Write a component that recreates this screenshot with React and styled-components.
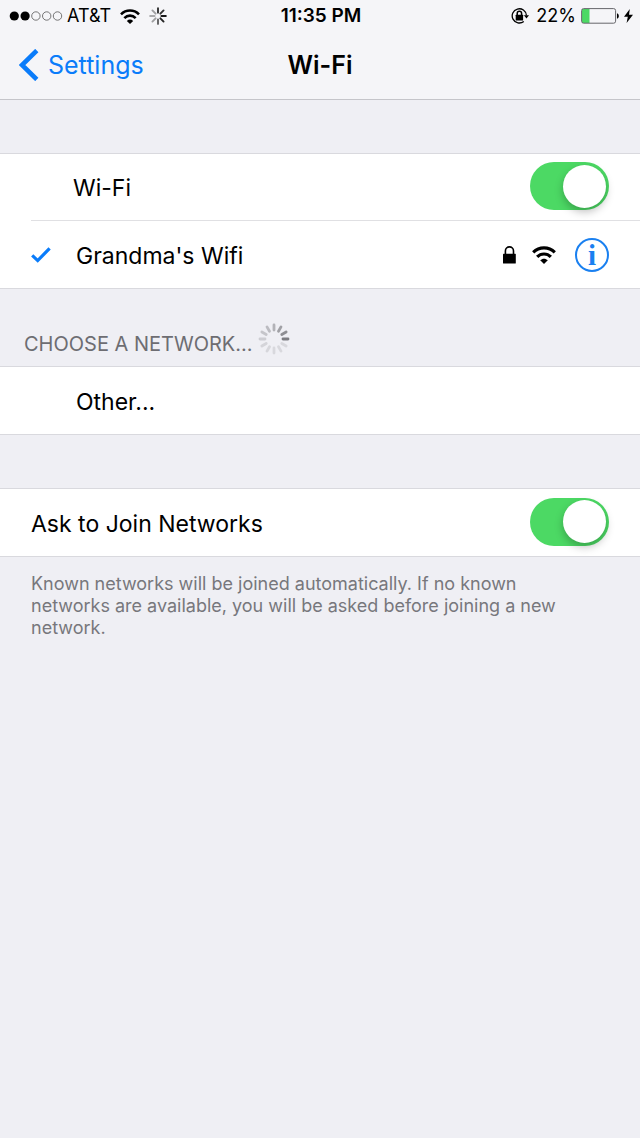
import React, { useState } from 'react';
import styled, { createGlobalStyle } from 'styled-components';

const GlobalStyle = createGlobalStyle`
  * {
    box-sizing: border-box;
  }

  body {
    margin: 0;
    background-color: #efeff4;
    color: #000000;
    font-family: Inter, "Liberation Sans", sans-serif;
    font-size: 23px;
  }
`;

const Header = styled.header`
  background-color: #f5f5f8;
  border-bottom: 1px solid #c5c5ca;
`;

const StatusBar = styled.div`
  display: grid;
  grid-template-columns: 1fr auto 1fr;
  align-items: center;
  height: 32px;
  padding: 0 7px 0 9px;
  font-size: 18px;
  line-height: 32px;
`;

const StatusGroup = styled.div`
  display: flex;
  align-items: center;
  justify-content: ${({ $end }) => ($end ? 'flex-end' : 'flex-start')};
  gap: ${({ $end }) => ($end ? 5 : 9)}px;
`;

const Carrier = styled.span`
  display: flex;
  align-items: center;
  gap: 4px;
`;

const Clock = styled.time`
  font-size: 19px;
  font-weight: 600;
`;

const Percent = styled.span`
  margin-left: 2px;
`;

const NavBar = styled.nav`
  display: grid;
  grid-template-columns: 1fr auto 1fr;
  align-items: center;
  height: 67px;
  padding: 0 19px 2px;
`;

const BackLink = styled.a`
  display: flex;
  align-items: center;
  gap: 9px;
  color: #0a7cfa;
  font-size: 25px;
  text-decoration: none;
`;

const Title = styled.h1`
  margin: 0;
  font-size: 25px;
  font-weight: 600;
`;

const Group = styled.section`
  margin-top: ${({ $spaced }) => ($spaced ? 53 : 0)}px;
  background-color: #ffffff;
  border-top: 1px solid #d9d9de;
  border-bottom: 1px solid #d9d9de;
`;

const Row = styled.div`
  display: flex;
  align-items: center;
  height: ${({ $short }) => ($short ? 66 : 67)}px;
  margin-left: 31px;
  padding-right: 31px;

  & + & {
    height: 68px;
    border-top: 1px solid #e0e0e3;
  }
`;

const RowLabel = styled.label`
  flex: 1;
  padding-top: 2px;
  padding-left: ${({ $indent }) => $indent || 0}px;
`;

const NetworkButton = styled.button`
  display: flex;
  flex: 1;
  align-items: center;
  padding: 0;
  border: 0;
  background: none;
  color: inherit;
  font: inherit;
  text-align: left;
`;

const NetworkName = styled.span`
  padding-top: 2px;
`;

const CheckSlot = styled.span`
  display: flex;
  width: 45px;
`;

const NetworkIcons = styled.span`
  display: flex;
  align-items: center;
  gap: 16px;
  margin-left: auto;
  margin-right: 19px;
`;

const InfoButton = styled.button`
  display: flex;
  align-items: center;
  justify-content: center;
  width: 34px;
  height: 34px;
  padding: 0;
  border: 2px solid #1a80f0;
  border-radius: 50%;
  background: none;
  color: #1a80f0;
  font-family: "Liberation Serif", serif;
  font-size: 29px;
  font-weight: bold;
  line-height: 30px;
`;

const Toggle = styled.input`
  appearance: none;
  display: flex;
  align-items: center;
  width: 79px;
  height: 48px;
  margin: 0 0 2px;
  padding: 0 3px;
  border-radius: 24px;
  background-color: #e5e5ea;

  &::before {
    content: '';
    width: 43px;
    height: 43px;
    border-radius: 50%;
    background-color: #ffffff;
    box-shadow: 0 4px 8px rgba(0, 0, 0, 0.25);
  }

  &:checked {
    justify-content: flex-end;
    background-color: #4cd964;
  }
`;

const SectionHeader = styled.div`
  display: flex;
  align-items: flex-end;
  gap: 5px;
  height: 77px;
  padding: 0 24px 11px;
`;

const SectionTitle = styled.h2`
  margin: 0;
  color: #6d6d72;
  font-size: 20px;
  font-weight: 400;
  line-height: 22px;
  text-transform: uppercase;
`;

const Footnote = styled.p`
  margin: 0;
  padding: 16px 64px 16px 31px;
  color: #77777c;
  font-size: 18px;
  line-height: 22px;
`;

const SignalDots = () => (
  <svg width="54" height="12" viewBox="0 0 54 12" aria-hidden="true">
    {[0, 1, 2, 3, 4].map((i) => (
      <circle
        key={i}
        cx={5.3 + i * 10.8}
        cy="6"
        r={i < 2 ? 4.6 : 4.2}
        fill={i < 2 ? '#000' : 'none'}
        stroke={i < 2 ? 'none' : '#555'}
        strokeWidth="0.8"
      />
    ))}
  </svg>
);

const WifiIcon = ({ width, height }) => (
  <svg width={width} height={height} viewBox="0 0 24 18" aria-hidden="true">
    <g fill="none" stroke="#000" strokeWidth="3.1">
      <path d="M1.2 6.4C7.2 0.3 16.8 0.3 22.8 6.4" />
      <path d="M5.2 10.9C9 7 15 7 18.8 10.9" />
    </g>
    <path d="M8.2 14.3C10.5 12.2 13.5 12.2 15.8 14.3L12 18Z" />
  </svg>
);

const Spinner = ({ size, spokes, inner, width, color, opacities }) => (
  <svg width={size} height={size} viewBox="-16 -16 32 32" aria-hidden="true">
    {opacities.map((opacity, i) => (
      <line
        key={i}
        y1={-inner}
        y2="-14"
        stroke={color}
        strokeWidth={width}
        strokeLinecap="round"
        opacity={opacity}
        transform={`rotate(${(360 / spokes) * i})`}
      />
    ))}
  </svg>
);

const RotationLockIcon = () => (
  <svg width="18" height="18" viewBox="0 0 18 18" aria-hidden="true">
    <path d="M15.4 8.4A7.1 7.1 0 1 0 12.8 14.4" fill="none" stroke="#000" strokeWidth="1.3" />
    <path d="M12.9 8.2H18L15.5 11.4Z" />
    <rect x="4.7" y="7.8" width="7.4" height="5.6" rx="0.5" />
    <path d="M6.2 8.5V6.4A2.2 2.2 0 0 1 10.6 6.4V8.5" fill="none" stroke="#000" strokeWidth="1.5" />
  </svg>
);

const BatteryIcon = () => (
  <svg width="38" height="16" viewBox="0 0 38 16" aria-hidden="true">
    <rect x="1" y="1" width="7.5" height="14" fill="#4cd964" />
    <rect x="0.6" y="0.6" width="34" height="14.6" rx="2" fill="none" stroke="#66666a" strokeWidth="1" />
    <path d="M36 5.2C38.4 6 38.4 10 36 10.8Z" />
  </svg>
);

const BoltIcon = () => (
  <svg width="9" height="14" viewBox="0 0 9 14" aria-hidden="true">
    <path d="M5.8 0L0 7.7H3.8L2.6 14L9 5.7H5L5.8 0Z" />
  </svg>
);

const ChevronIcon = () => (
  <svg width="20" height="32" viewBox="0 0 20 32" aria-hidden="true">
    <path d="M17.8 1.5L3 16L17.8 30.5" fill="none" stroke="#0a7cfa" strokeWidth="4.6" />
  </svg>
);

const CheckIcon = () => (
  <svg width="20" height="16" viewBox="0 0 20 16" aria-hidden="true">
    <path d="M1.2 8.4L6.7 13.6L18.6 1.4" fill="none" stroke="#0a7cfa" strokeWidth="3.2" />
  </svg>
);

const LockIcon = () => (
  <svg width="13" height="18" viewBox="0 0 13 18" aria-hidden="true">
    <rect x="0" y="7.8" width="12.8" height="9.8" rx="0.6" />
    <path d="M2.4 8.5V4.9A4.05 4.05 0 0 1 10.5 4.9V8.5" fill="none" stroke="#000" strokeWidth="1.6" />
  </svg>
);

const App = () => {
  const [wifi, setWifi] = useState(true);
  const [askToJoin, setAskToJoin] = useState(true);

  return (
    <>
      <GlobalStyle />
      <Header>
        <StatusBar>
          <StatusGroup>
            <Carrier>
              <SignalDots />
              AT&amp;T
            </Carrier>
            <WifiIcon width={20} height={15} />
            <Spinner
              size={18}
              spokes={8}
              inner={6}
              width={3.4}
              color="#000000"
              opacities={[0.8, 0.8, 0.9, 0.85, 0.6, 0.35, 0.3, 0.35]}
            />
          </StatusGroup>
          <Clock>11:35 PM</Clock>
          <StatusGroup $end>
            <RotationLockIcon />
            <Percent>22%</Percent>
            <BatteryIcon />
            <BoltIcon />
          </StatusGroup>
        </StatusBar>
        <NavBar>
          <BackLink href="#settings">
            <ChevronIcon />
            Settings
          </BackLink>
          <Title>Wi-Fi</Title>
        </NavBar>
      </Header>

      <main>
        <Group $spaced>
          <Row $short>
            <RowLabel htmlFor="wifi" $indent={42}>Wi-Fi</RowLabel>
            <Toggle
              id="wifi"
              type="checkbox"
              role="switch"
              checked={wifi}
              onChange={(e) => setWifi(e.target.checked)}
            />
          </Row>
          <Row>
            <NetworkButton type="button">
              <CheckSlot>
                <CheckIcon />
              </CheckSlot>
              <NetworkName>Grandma's Wifi</NetworkName>
              <NetworkIcons>
                <LockIcon />
                <WifiIcon width={24} height={18} />
              </NetworkIcons>
            </NetworkButton>
            <InfoButton type="button" aria-label="Network details">i</InfoButton>
          </Row>
        </Group>

        <SectionHeader>
          <SectionTitle>Choose a Network...</SectionTitle>
          <Spinner
            size={32}
            spokes={12}
            inner={9}
            width={2.8}
            color="#77777c"
            opacities={[0.5, 0.65, 0.8, 0.95, 0.18, 0.18, 0.18, 0.2, 0.22, 0.28, 0.34, 0.42]}
          />
        </SectionHeader>

        <Group>
          <Row>
            <NetworkButton type="button">
              <CheckSlot />
              <NetworkName>Other...</NetworkName>
            </NetworkButton>
          </Row>
        </Group>

        <Group $spaced>
          <Row>
            <RowLabel htmlFor="ask-to-join">Ask to Join Networks</RowLabel>
            <Toggle
              id="ask-to-join"
              type="checkbox"
              role="switch"
              checked={askToJoin}
              onChange={(e) => setAskToJoin(e.target.checked)}
            />
          </Row>
        </Group>
        <Footnote>
          Known networks will be joined automatically. If no known networks are available, you will be
          asked before joining a new network.
        </Footnote>
      </main>
    </>
  );
};

export default App;
